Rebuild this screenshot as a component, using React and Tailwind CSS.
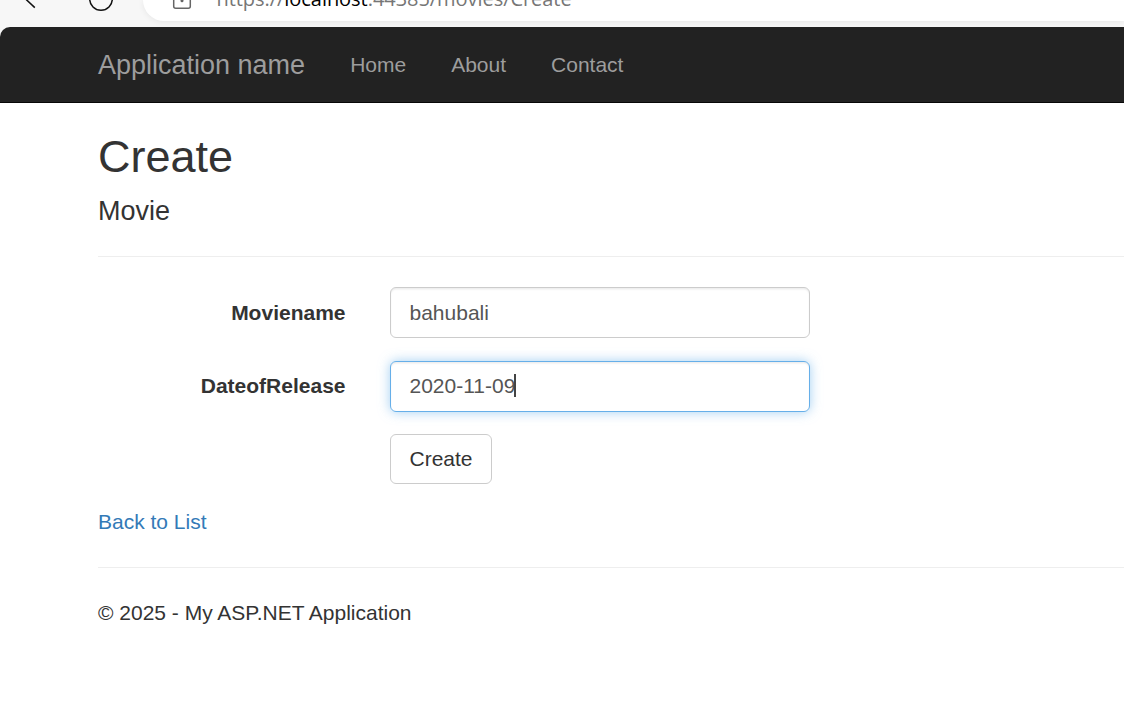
import React from "react";

function BrowserBar() {
  return (
    <div className="flex h-[27px] overflow-hidden bg-[#f7f7f7]">
      <svg className="h-[21px] w-[143px] shrink-0" viewBox="0 0 143 21" fill="none" stroke="#111" strokeWidth="1.5">
        <path d="M23.5 -3 L34.8 7.6" />
        <circle cx="101" cy="-1" r="11.3" />
      </svg>
      <div className="flex h-[21px] flex-1 items-start rounded-bl-[22px] bg-white shadow-[0_1px_6px_rgba(0,0,0,0.07)]">
        <svg className="ml-[29px] h-[12px] w-[20px] shrink-0" viewBox="0 0 20 12" fill="none" stroke="#666" strokeWidth="1.5">
          <path d="M1.7 -4 V6.2 Q1.7 8.2 3.7 8.2 H16.3 Q18.3 8.2 18.3 6.2 V-4" />
          <circle cx="10" cy="0.7" r="1.5" fill="#666" stroke="none" />
        </svg>
        <div className="-mt-[16px] ml-[24.5px] whitespace-nowrap font-['Open_Sans','Noto_Sans',sans-serif] text-[20px] leading-[30px] tracking-[-0.05px] text-[#767676]">
          https://<span className="text-black">localhost</span>:44385/movies/Create
        </div>
      </div>
    </div>
  );
}

function Navbar() {
  return (
    <nav className="flex h-[76px] items-center rounded-tl-[10px] border-b border-[#080808] bg-[#222] pl-[98px] text-[21px] leading-[30px] text-[#9d9d9d]">
      <a className="mr-[45px] text-[27px]">Application name</a>
      <a className="mr-[45px]">Home</a>
      <a className="mr-[45px]">About</a>
      <a>Contact</a>
    </nav>
  );
}

export default function App() {
  return (
    <div className="h-[703px] w-full overflow-hidden bg-white font-['Liberation_Sans',Arial,sans-serif] text-[21px] leading-[30px] text-[#333]">
      <BrowserBar />
      <div className="bg-[#f7f7f7]">
        <Navbar />
      </div>
      <main className="pl-[98px]">
        <h2 className="pt-[29px] text-[45px] leading-[50px]">Create</h2>
        <h4 className="mt-[14px] text-[27px] leading-[30px]">Movie</h4>
        <hr className="mt-[30px] border-t border-[#eee]" />
        <form className="mt-[30px]" onSubmit={(e) => e.preventDefault()}>
          <div className="flex h-[51px] items-center">
            <label className="w-[247.5px] text-right font-bold">Moviename</label>
            <div className="ml-[44.5px] flex h-[51px] w-[420px] items-center rounded-[6px] border border-[#ccc] pl-[18.5px] text-[#555] shadow-[inset_0_1.5px_1.5px_rgba(0,0,0,0.075)]">
              bahubali
            </div>
          </div>
          <div className="mt-[23px] flex h-[51px] items-center">
            <label className="w-[247.5px] pb-[2px] text-right font-bold">DateofRelease</label>
            <div className="ml-[44.5px] flex h-[51px] w-[420px] items-center rounded-[6px] border border-[#66afe9] pb-[2px] pl-[18.5px] text-[#555] shadow-[inset_0_1.5px_1.5px_rgba(0,0,0,0.075),0_0_12px_rgba(102,175,233,0.6)]">
              2020-11-09
              <span className="-ml-[1.5px] h-[23px] w-[2px] bg-[#444]" />
            </div>
          </div>
          <button className="ml-[292px] mt-[22px] flex h-[50px] w-[102px] items-center justify-center rounded-[6px] border border-[#ccc] bg-white">
            Create
          </button>
        </form>
        <div className="mt-[23px] text-[#337ab7]">Back to List</div>
        <hr className="mt-[30px] border-t border-[#eee]" />
        <footer className="mt-[30px]">© 2025 - My ASP.NET Application</footer>
      </main>
    </div>
  );
}
